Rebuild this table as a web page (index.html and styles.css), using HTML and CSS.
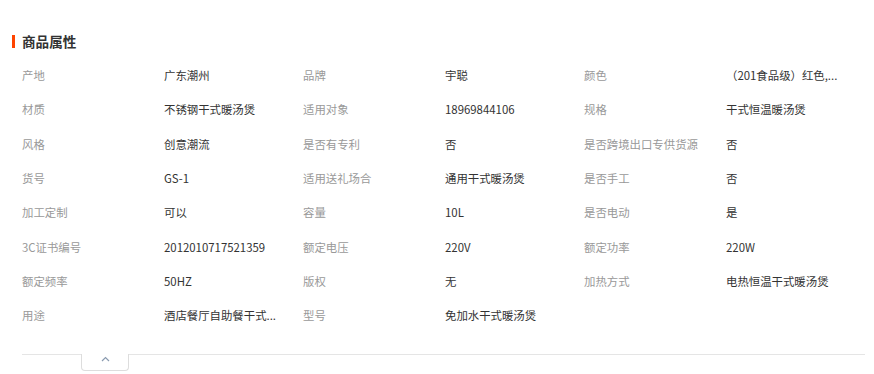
FILE: index.html
```html
<!DOCTYPE html>
<html lang="zh-CN">
<head>
<meta charset="utf-8">
<title>商品属性</title>
<link rel="stylesheet" href="styles.css">
</head>
<body>
<div class="attrs">
  <h2 class="attrs-title">商品属性</h2>
  <div class="attrs-grid">
    <div class="cell"><span class="k">产地</span><span class="v">广东潮州</span></div>
    <div class="cell"><span class="k">品牌</span><span class="v">宇聪</span></div>
    <div class="cell"><span class="k">颜色</span><span class="v" title="（201食品级）红色,黑色,白色">（201食品级）红色,...</span></div>

    <div class="cell"><span class="k">材质</span><span class="v">不锈钢干式暖汤煲</span></div>
    <div class="cell"><span class="k">适用对象</span><span class="v">18969844106</span></div>
    <div class="cell"><span class="k">规格</span><span class="v">干式恒温暖汤煲</span></div>

    <div class="cell"><span class="k">风格</span><span class="v">创意潮流</span></div>
    <div class="cell"><span class="k">是否有专利</span><span class="v">否</span></div>
    <div class="cell"><span class="k">是否跨境出口专供货源</span><span class="v">否</span></div>

    <div class="cell"><span class="k">货号</span><span class="v">GS-1</span></div>
    <div class="cell"><span class="k">适用送礼场合</span><span class="v">通用干式暖汤煲</span></div>
    <div class="cell"><span class="k">是否手工</span><span class="v">否</span></div>

    <div class="cell"><span class="k">加工定制</span><span class="v">可以</span></div>
    <div class="cell"><span class="k">容量</span><span class="v">10L</span></div>
    <div class="cell"><span class="k">是否电动</span><span class="v">是</span></div>

    <div class="cell"><span class="k">3C证书编号</span><span class="v">2012010717521359</span></div>
    <div class="cell"><span class="k">额定电压</span><span class="v">220V</span></div>
    <div class="cell"><span class="k">额定功率</span><span class="v">220W</span></div>

    <div class="cell"><span class="k">额定频率</span><span class="v">50HZ</span></div>
    <div class="cell"><span class="k">版权</span><span class="v">无</span></div>
    <div class="cell"><span class="k">加热方式</span><span class="v">电热恒温干式暖汤煲</span></div>

    <div class="cell"><span class="k">用途</span><span class="v" title="酒店餐厅自助餐干式暖汤煲">酒店餐厅自助餐干式...</span></div>
    <div class="cell"><span class="k">型号</span><span class="v">免加水干式暖汤煲</span></div>
    <div class="cell"></div>
  </div>
  <div class="attrs-foot">
    <button class="toggle" type="button" aria-label="收起">
      <svg width="9" height="6" viewBox="0 0 9 6"><polyline points="1,5 4.5,1.5 8,5" fill="none" stroke="#8a9bb0" stroke-width="1.2"/></svg>
    </button>
  </div>
</div>
</body>
</html>
```
FILE: styles.css
```css
* { box-sizing: border-box; }
html, body { margin: 0; padding: 0; background: #fff; }
body {
  font-family: "Noto Sans CJK SC", "Noto Sans", sans-serif;
  color: #333;
}
.attrs {
  padding: 35px 9px 0 12px;
}
.attrs-title {
  margin: 0;
  border-left: 3px solid #ff4400;
  padding-left: 7px;
  font-size: 13.6px;
  line-height: 13px;
  font-weight: bold;
  color: #333;
}
.attrs-grid {
  margin: 10px 0 0 10px;
  display: grid;
  grid-template-columns: repeat(3, 1fr);
  grid-auto-rows: 34.29px;
}
.cell {
  display: flex;
  align-items: center;
  font-size: 11.4px;
  line-height: 16px;
  min-width: 0;
}
.k {
  flex: 0 0 142px;
  color: #999;
  white-space: nowrap;
}
.v {
  color: #333;
  white-space: nowrap;
}
.attrs-foot {
  margin: 22px 0 0 10px;
  border-top: 1px solid #e5e5e5;
  display: flex;
}
.toggle {
  margin: -1px 0 0 59px;
  width: 48px;
  height: 17px;
  padding: 0 0 6px;
  background: #fff;
  border: 1px solid #ddd;
  border-top: none;
  border-radius: 0 0 4px 4px;
  display: flex;
  align-items: center;
  justify-content: center;
  cursor: pointer;
}
.toggle svg { display: block; }
```
